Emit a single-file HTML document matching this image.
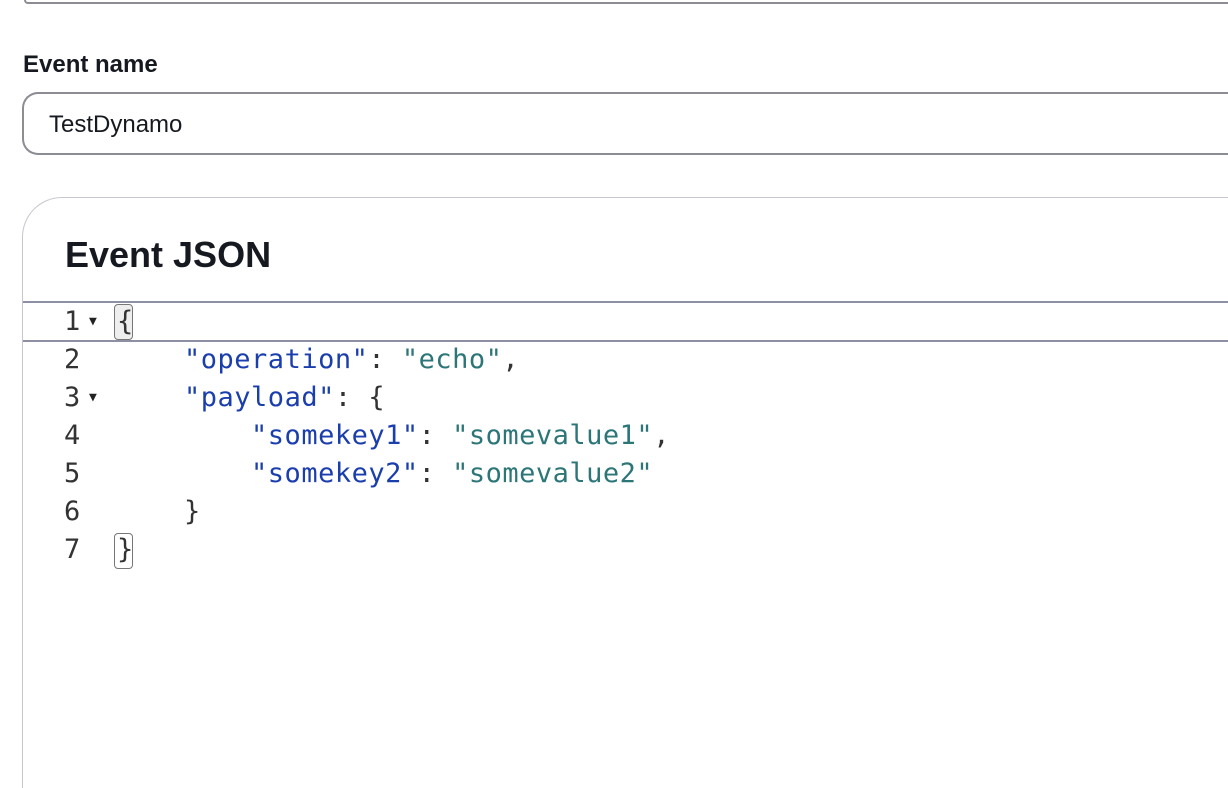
<!DOCTYPE html>
<html style="height:788px;overflow:hidden"><head><style>
body{margin:0;width:1228px;height:788px;background:#fff;overflow:hidden;position:relative;font-family:"Liberation Sans",sans-serif;color:#16191f}
.top{position:absolute;left:24px;top:0;width:1204px;height:2px;border:2px solid #8c8c94;border-top:none;border-right:none;border-radius:0 0 0 16px}
.lbl{position:absolute;left:23px;top:51px;font-weight:bold;font-size:24px}
.inp{position:absolute;left:22px;top:92px;width:1206px;border:2px solid #8c8c94;border-right:none;border-radius:16px 0 0 16px;box-sizing:border-box;height:63px}
.inp span{position:absolute;left:25px;top:17px;font-size:24px}
.card{position:absolute;left:22px;top:197px;width:1206px;height:591px;border:1.5px solid #c6c6cd;border-right:none;border-bottom:none;border-radius:40px 0 0 0;box-sizing:border-box}
.h{position:absolute;left:65px;top:234px;font-weight:bold;font-size:36px}
.act{position:absolute;left:23px;top:301px;width:1205px;height:37px;border-top:2px solid #8d8fa5;border-bottom:2px solid #8d8fa5}
.code{position:absolute;left:0;top:303px;font-family:"DejaVu Sans Mono","Liberation Mono",monospace;font-size:27px;line-height:38px;letter-spacing:0.5px}
.ln{position:absolute;left:64px;width:40px;color:#333}
.ar{position:absolute;left:89px;font-size:13px;color:#222}
.tx{position:absolute;left:117px;white-space:pre;color:#333}
.k{color:#1b3ead}.v{color:#2d7678}
.br{position:absolute;left:114px;width:19px;height:36px;border:1.5px solid #777;border-radius:4px;box-sizing:border-box}
</style></head><body>
<div class="top"></div>
<div class="lbl">Event name</div>
<div class="inp"><span>TestDynamo</span></div>
<div class="card"></div>
<div class="h">Event JSON</div>
<div class="act"></div>
<div class="br" style="top:304px;background:#eee"></div>
<div class="br" style="top:533px"></div>
<div class="code">
<div class="ln" style="top:0">1</div><div class="ar" style="top:0">▼</div><div class="tx" style="top:0">{</div>
<div class="ln" style="top:38px">2</div><div class="tx" style="top:38px">    <span class="k">"operation"</span>: <span class="v">"echo"</span>,</div>
<div class="ln" style="top:76px">3</div><div class="ar" style="top:76px">▼</div><div class="tx" style="top:76px">    <span class="k">"payload"</span>: {</div>
<div class="ln" style="top:114px">4</div><div class="tx" style="top:114px">        <span class="k">"somekey1"</span>: <span class="v">"somevalue1"</span>,</div>
<div class="ln" style="top:152px">5</div><div class="tx" style="top:152px">        <span class="k">"somekey2"</span>: <span class="v">"somevalue2"</span></div>
<div class="ln" style="top:190px">6</div><div class="tx" style="top:190px">    }</div>
<div class="ln" style="top:228px">7</div><div class="tx" style="top:228px">}</div>
</div>
</body></html>
